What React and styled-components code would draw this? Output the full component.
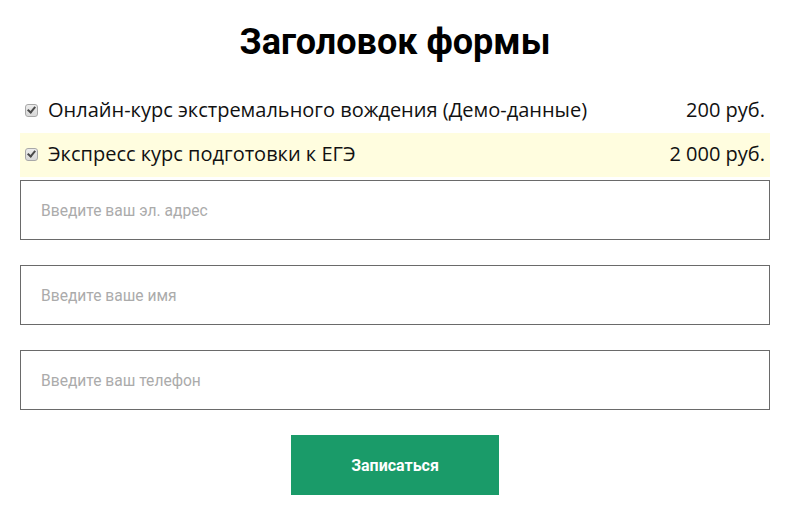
import React from "react";
import styled, { createGlobalStyle } from "styled-components";

const Global = createGlobalStyle`
  body { margin: 0; background: #fff; }
  * { box-sizing: border-box; }
`;

const Form = styled.form`
  width: 793px;
  padding: 0 23px 0 20px;
  display: flex;
  flex-direction: column;
`;

const Title = styled.h1`
  margin: 20px 0 0;
  height: 45px;
  font-family: Roboto, sans-serif;
  font-weight: 700;
  font-size: 36px;
  line-height: 45px;
  text-align: center;
  color: #000;
`;

const Items = styled.div`
  margin-top: 24px;
  display: flex;
  flex-direction: column;
`;

const Item = styled.label`
  display: flex;
  align-items: center;
  height: 44px;
  padding: 0 5px 4px 5px;
  background: ${(p) => (p.$highlight ? "#fffddf" : "transparent")};
  font-family: "Open Sans", sans-serif;
  font-size: 20px;
  color: #111;
`;

const Check = styled.input`
  appearance: none;
  flex: none;
  width: 13px;
  height: 13px;
  margin: 2px 10px 0 0;
  border: 1px solid #a8a8a8;
  border-radius: 3px;
  background: linear-gradient(#ececec, #d8d8d8);
  position: relative;
  &::after {
    content: "";
    position: absolute;
    left: 3px;
    top: 0px;
    width: 3px;
    height: 6px;
    border: solid #4a4a4a;
    border-width: 0 2px 2px 0;
    transform: rotate(40deg);
  }
`;

const Name = styled.span`
  flex: 1;
`;

const Price = styled.span``;

const Fields = styled.div`
  margin-top: 3px;
  display: flex;
  flex-direction: column;
  gap: 25px;
`;

const Field = styled.input`
  width: 750px;
  height: 60px;
  border: 1px solid #6a6a6a;
  padding: 1px 20px 0;
  font-family: Roboto, sans-serif;
  font-size: 15.6px;
  color: #333;
  outline: none;
  &::placeholder { color: #ababab; }
`;

const Submit = styled.button`
  align-self: center;
  margin: 25px 0 0 0;
  width: 208px;
  height: 60px;
  border: none;
  background: #1a9b69;
  color: #fff;
  font-family: Roboto, sans-serif;
  font-weight: 700;
  font-size: 16px;
  cursor: pointer;
`;

export default function App() {
  return (
    <>
      <Global />
      <Form onSubmit={(e) => e.preventDefault()}>
        <Title>Заголовок формы</Title>
        <Items>
          <Item>
            <Check type="checkbox" defaultChecked />
            <Name>Онлайн-курс экстремального вождения (Демо-данные)</Name>
            <Price>200 руб.</Price>
          </Item>
          <Item $highlight>
            <Check type="checkbox" defaultChecked />
            <Name>Экспресс курс подготовки к ЕГЭ</Name>
            <Price>2 000 руб.</Price>
          </Item>
        </Items>
        <Fields>
          <Field type="email" placeholder="Введите ваш эл. адрес" />
          <Field type="text" placeholder="Введите ваше имя" />
          <Field type="tel" placeholder="Введите ваш телефон" />
        </Fields>
        <Submit type="submit">Записаться</Submit>
      </Form>
    </>
  );
}
